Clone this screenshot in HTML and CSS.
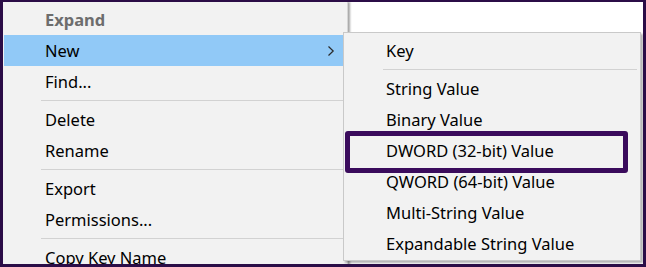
FILE: index.html
```html
<!DOCTYPE html>
<html>
<head>
<meta charset="utf-8">
<link rel="stylesheet" href="styles.css">
</head>
<body>
<div class="frame">
  <div class="backdrop">ontu menu/&nbsp;&nbsp;&nbsp;&nbsp;&nbsp;vvmenu/menu/</div>
  <div class="menu main">
    <div class="item default">Expand</div>
    <div class="item active"><span>New</span>
      <svg class="chev" width="8" height="12" viewBox="0 0 8 12"><polyline points="1.5,1.5 6.2,6 1.5,10.5" fill="none" stroke="#2a2a2a" stroke-width="1.2"/></svg>
    </div>
    <div class="item">Find...</div>
    <div class="sep"></div>
    <div class="item">Delete</div>
    <div class="item">Rename</div>
    <div class="sep"></div>
    <div class="item">Export</div>
    <div class="item">Permissions...</div>
    <div class="sep"></div>
    <div class="item">Copy Key Name</div>
  </div>
  <div class="menu sub">
    <div class="item">Key</div>
    <div class="sep"></div>
    <div class="item">String Value</div>
    <div class="item">Binary Value</div>
    <div class="item marked">DWORD (32-bit) Value</div>
    <div class="item">QWORD (64-bit) Value</div>
    <div class="item">Multi-String Value</div>
    <div class="item">Expandable String Value</div>
  </div>
</div>
</body>
</html>
```
FILE: styles.css
```css
*, *::before, *::after { box-sizing: border-box; }
html, body { margin: 0; padding: 0; }
body {
  width: 646px;
  height: 267px;
  overflow: hidden;
  font-family: "Noto Sans", "Open Sans", sans-serif;
}
.frame {
  position: relative;
  width: 646px;
  height: 267px;
  border-style: solid;
  border-color: #2b0d47;
  border-width: 2px 3px 3px 3px;
  background: #ffffff;
  overflow: hidden;
}
.backdrop {
  position: absolute;
  left: 342px;
  top: 257px;
  font-size: 15px;
  font-weight: bold;
  color: #3a3a55;
  letter-spacing: 1px;
  white-space: nowrap;
}
.menu {
  background: #f2f2f2;
  color: #000;
  font-size: 16.5px;
}
.main {
  width: 345px;
  height: 270px;
  padding-top: 2px;
  border-right: 1px solid #d6d6d6;
  box-shadow: 2px 0 2px rgba(0, 0, 0, 0.35);
}
.item {
  height: 31px;
  line-height: 31px;
  padding-left: 42px;
  white-space: nowrap;
}
.main .item.active {
  background: #91c9f7;
  margin: 0 2px 0 1px;
  padding-left: 41px;
  padding-right: 10px;
  display: flex;
  align-items: center;
  justify-content: space-between;
}
.chev { display: block; }
.default {
  font-weight: bold;
  color: #6d6d6d;
}
.sep {
  height: 7px;
  padding-top: 3px;
  margin-left: 38px;
}
.sep::before {
  content: "";
  display: block;
  height: 1px;
  background: #d2d2d2;
}
.sub {
  position: absolute;
  left: 340px;
  top: 30px;
  width: 298px;
  padding: 2px 0 1px 0;
  border: 1px solid #c9c9c9;
  box-shadow: 2px 2px 2px rgba(0, 0, 0, 0.3);
}
.sub .sep {
  margin-left: 39px;
  margin-right: 3px;
}
.marked { position: relative; }
.marked::after {
  content: "";
  position: absolute;
  left: 1px;
  top: -4px;
  width: 283px;
  height: 42px;
  border: 5px solid #3a0b5c;
  border-radius: 3px;
}
```
